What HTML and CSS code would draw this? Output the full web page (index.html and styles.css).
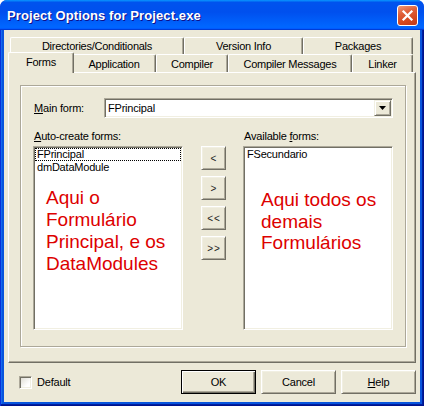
FILE: index.html
```html
<!DOCTYPE html>
<html>
<head>
<meta charset="utf-8">
<link rel="stylesheet" href="styles.css">
</head>
<body>
<div class="window">
  <div class="titlebar">
    <span class="title">Project Options for Project.exe</span>
    <div class="close">
      <svg width="13" height="13" viewBox="0 0 13 13"><path d="M2.5 2.5 L10.5 10.5 M10.5 2.5 L2.5 10.5" stroke="#fff" stroke-width="2.2" stroke-linecap="square"/></svg>
    </div>
  </div>
  <div class="frame">
    <div class="client">
      <div class="tabrow back">
        <div class="tab t-dir">Directories/Conditionals</div>
        <div class="tab t-ver">Version Info</div>
        <div class="tab t-pkg">Packages</div>
      </div>
      <div class="tabrow front">
        <div class="tab sel t-forms">Forms</div>
        <div class="tab t-app">Application</div>
        <div class="tab t-comp">Compiler</div>
        <div class="tab t-msg">Compiler Messages</div>
        <div class="tab t-link">Linker</div>
      </div>
      <div class="page">
        <div class="group">
          <div class="mainrow">
            <span class="lbl-main"><u>M</u>ain form:</span>
            <div class="combo">
              <span class="combo-text">FPrincipal</span>
              <div class="dd">
                <svg width="7" height="4" viewBox="0 0 7 4"><path d="M0 0 H7 L3.5 4 Z" fill="#000"/></svg>
              </div>
            </div>
          </div>
          <div class="lists">
            <div class="col">
              <div class="lbl"><u>A</u>uto-create forms:</div>
              <div class="listbox">
                <div class="item focus">FPrincipal</div>
                <div class="item">dmDataModule</div>
                <div class="note note-left">Aqui o<br>Formulário<br>Principal, e os<br>DataModules</div>
              </div>
            </div>
            <div class="arrows">
              <div class="btn arrbtn">&lt;</div>
              <div class="btn arrbtn">&gt;</div>
              <div class="btn arrbtn">&lt;&lt;</div>
              <div class="btn arrbtn">&gt;&gt;</div>
            </div>
            <div class="col">
              <div class="lbl">Available <u>f</u>orms:</div>
              <div class="listbox">
                <div class="item">FSecundario</div>
                <div class="note note-right">Aqui todos os<br>demais<br>Formulários</div>
              </div>
            </div>
          </div>
        </div>
      </div>
      <div class="footer">
        <div class="check"></div>
        <span class="check-lbl">Default</span>
        <div class="buttons">
          <div class="btn push default">OK</div>
          <div class="btn push">Cancel</div>
          <div class="btn push"><u>H</u>elp</div>
        </div>
      </div>
    </div>
  </div>
</div>
</body>
</html>
```

FILE: styles.css
```css
* { box-sizing: border-box; }
html, body { margin: 0; padding: 0; background: #ffffff; }
body {
  font-family: "Liberation Sans", Arial, sans-serif;
  font-size: 11px;
  color: #000;
}
u { text-decoration: underline; text-underline-offset: 1px; }

.window {
  width: 424px;
  height: 406px;
  display: flex;
  flex-direction: column;
  border-radius: 7px 7px 0 0;
  overflow: hidden;
  background: #0831d9;
}

.titlebar {
  height: 30px;
  flex: none;
  display: flex;
  align-items: center;
  justify-content: space-between;
  padding: 1px 6px 0 7px;
  background: linear-gradient(180deg, #0997ff, #0053ee 8%, #0050ee 40%, #0066ff 88%, #0066ff 93%, #005bff 95%, #003dd7 96%, #003dd7);
}
.title {
  color: #fff;
  font-weight: bold;
  font-size: 13px;
  letter-spacing: 0.1px;
  text-shadow: 1px 1px #0f1089;
}
.close {
  width: 21px;
  height: 21px;
  border: 1px solid #fff;
  border-radius: 3px;
  background: linear-gradient(160deg, #f09a77 0%, #e0603a 35%, #d3481f 70%, #c0381a 100%);
  display: flex;
  align-items: center;
  justify-content: center;
}

.frame {
  flex: 1;
  display: flex;
  padding: 0 4px 4px;
  background: #0855dd;
  box-shadow: inset 1px 0 #0831d9, inset -1px -1px #00138c, inset -2px -2px #001ea0, inset 2px 0 #166aee;
}
.client {
  flex: 1;
  background: #ece9d8;
  padding: 7px 4px 8px;
  display: flex;
  flex-direction: column;
}

/* tabs */
.tabrow { display: flex; padding-left: 2px; flex: none; }
.back { height: 17px; }
.front { height: 18px; }
.tab {
  display: flex;
  align-items: center;
  justify-content: center;
  white-space: nowrap;
  background: #ece9d8;
  border-top: 1px solid #fff;
  border-left: 1px solid #fff;
  border-right: 1px solid #716f64;
  box-shadow: inset -1px 0 #aca899;
  border-radius: 2px 2px 0 0;
  letter-spacing: -0.25px;
}
.t-dir { width: 174px; }
.t-ver { width: 119px; }
.t-pkg { width: 110px; }
.t-forms { width: 66px; }
.t-app { width: 84px; }
.t-comp { width: 72px; }
.t-msg { width: 124px; }
.t-link { width: 61px; }
.tab.sel {
  position: relative;
  z-index: 1;
  margin: -2px -2px -1px -2px;
  padding-bottom: 2px;
}

/* page */
.page {
  flex: none;
  border-top: 1px solid #fff;
  border-left: 1px solid #fff;
  border-right: 1px solid #716f64;
  border-bottom: 1px solid #716f64;
  box-shadow: inset -1px -1px #aca899;
  padding: 12px 9px 15px 11px;
}
.group {
  border: 1px solid #aca899;
  box-shadow: inset 1px 1px #fff, 1px 1px #fff;
  padding: 12px 11px 16px 12px;
}
.mainrow {
  display: flex;
  align-items: center;
  height: 20px;
}
.lbl-main { width: 71px; padding-left: 1px; letter-spacing: -0.2px; }
.combo {
  width: 289px;
  height: 20px;
  display: flex;
  align-items: center;
  background: #fff;
  border: 1px solid;
  border-color: #aca899 #fff #fff #aca899;
  box-shadow: inset 1px 1px #716f64, inset -1px -1px #f1efe2;
  padding: 1px;
}
.combo-text { padding-left: 2px; flex: 1; letter-spacing: -0.2px; }
.dd {
  width: 17px;
  height: 16px;
  display: flex;
  align-items: center;
  justify-content: center;
  background: #ece9d8;
  border: 1px solid;
  border-color: #f1efe2 #716f64 #716f64 #f1efe2;
  box-shadow: inset 1px 1px #fff, inset -1px -1px #aca899;
}

.lists { display: flex; margin-top: 12px; }
.col { width: 150px; display: flex; flex-direction: column; }
.lbl { line-height: 13px; height: 13px; padding-left: 1px; letter-spacing: -0.2px; }
.listbox {
  margin-top: 3px;
  height: 184px;
  background: #fff;
  border: 1px solid;
  border-color: #aca899 #fff #fff #aca899;
  box-shadow: inset 1px 1px #716f64, inset -1px -1px #f1efe2;
  padding: 1px;
}
.item {
  height: 13px;
  line-height: 11px;
  border: 1px solid transparent;
  padding-left: 1px;
  letter-spacing: -0.2px;
}
.item.focus { border: 1px dotted #000; }
.note {
  color: #dd0000;
  font-size: 19px;
}
.note-left { margin-top: 13px; padding-left: 11px; line-height: 22px; }
.note-right { margin-top: 28px; padding-left: 16px; line-height: 21.5px; }

.arrows {
  width: 25px;
  margin: 16px 17px 0 18px;
  display: flex;
  flex-direction: column;
  gap: 6px;
}
.btn {
  display: flex;
  align-items: center;
  justify-content: center;
  background: #ece9d8;
  border: 1px solid;
  border-color: #fff #716f64 #716f64 #fff;
  box-shadow: inset 1px 1px #f1efe2, inset -1px -1px #aca899;
}
.arrbtn { height: 24px; color: #222; font-size: 10px; letter-spacing: 1px; padding-left: 1px; }

/* footer */
.footer {
  flex: none;
  display: flex;
  align-items: center;
  height: 24px;
  margin-top: 7px;
  padding-left: 11px;
}
.check {
  width: 13px;
  height: 13px;
  background: linear-gradient(135deg, #dcdad0, #fff 70%);
  border: 1px solid;
  border-color: #aca899 #fff #fff #aca899;
  box-shadow: inset 1px 1px #716f64, inset -1px -1px #f1efe2;
}
.check-lbl { margin-left: 5px; letter-spacing: -0.2px; }
.buttons { margin-left: auto; display: flex; gap: 5px; }
.push { width: 75px; height: 24px; letter-spacing: -0.2px; }
.push.default {
  border: 1px solid #000;
  box-shadow: inset 1px 1px #fff, inset -1px -1px #716f64, inset -2px -2px #aca899;
}
```
